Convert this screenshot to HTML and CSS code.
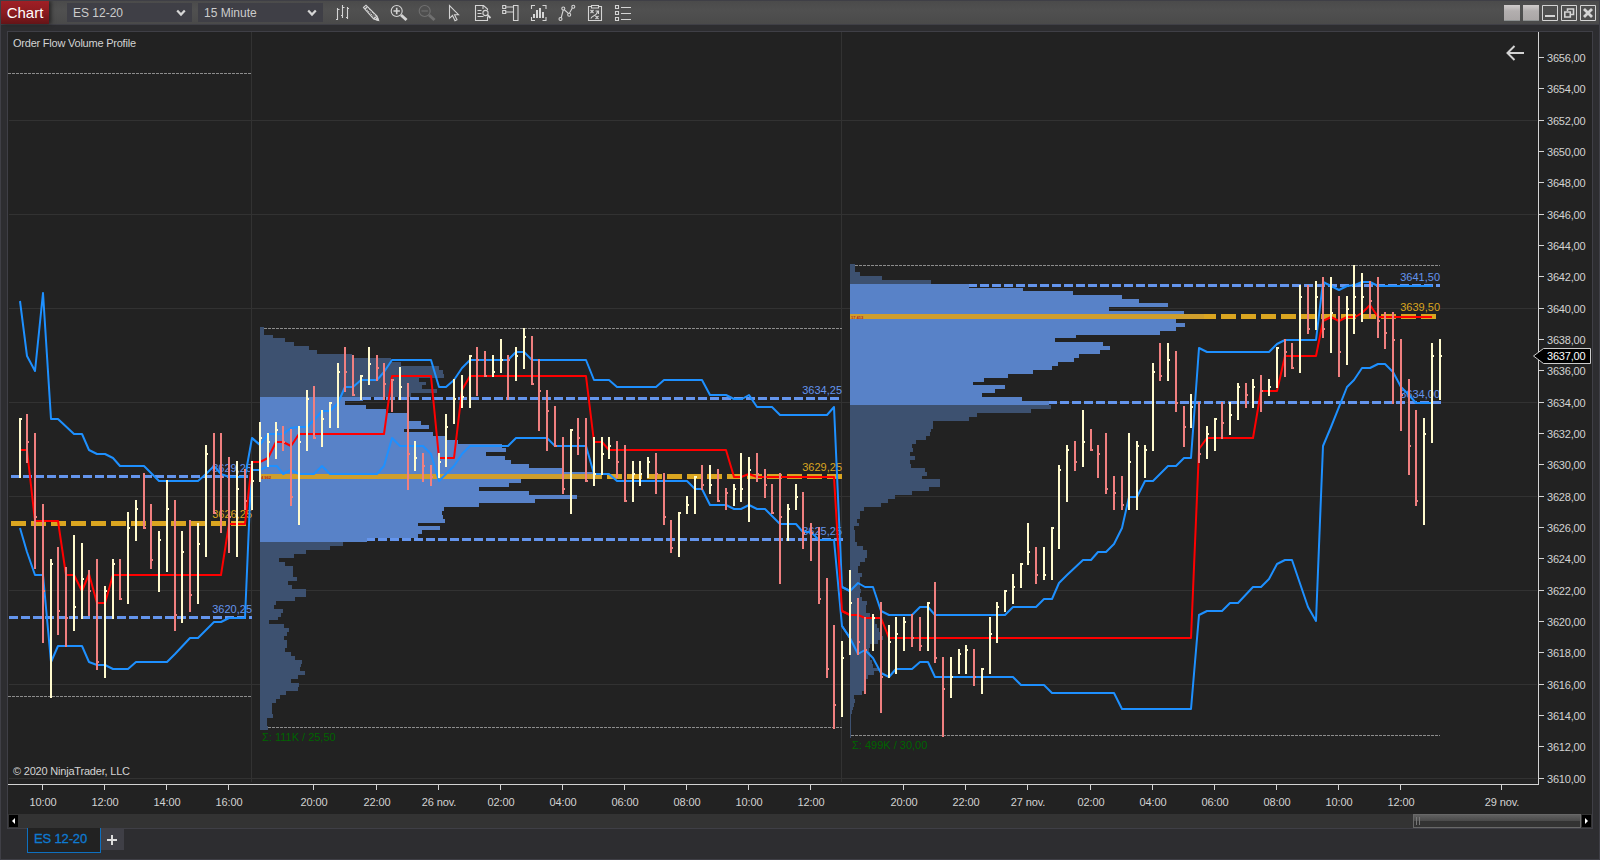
FILE: index.html
```html
<!DOCTYPE html>
<html lang="en">
<head>
<meta charset="utf-8">
<title>Chart - ES 12-20</title>
<link rel="stylesheet" href="styles.css">
</head>
<body>
<div class="window">
  <header class="toolbar">
    <div class="menu-title">Chart</div>
    <div class="select select-instrument"><span>ES 12-20</span><svg class="chevron" viewBox="0 0 10 8"><path d="M1.2 1.5 5 5.6 8.8 1.5"/></svg></div>
    <div class="select select-interval"><span>15 Minute</span><svg class="chevron" viewBox="0 0 10 8"><path d="M1.2 1.5 5 5.6 8.8 1.5"/></svg></div>
    <nav class="tools">
      <svg class="icon" viewBox="0 0 18 18"><path d="M3.500 4v12M8.500 1v13M13.500 3v12M2 15.500h1.500M3.500 5.500h2M7 11.500h1.500M8.500 3.500h2M12 13.500h1.500M13.500 4.500H15"/></svg>
      <svg class="icon" viewBox="0 0 18 18"><path d="M1.500 3.500 4 1.200l11 10.800 1.500 4.500-4.800-1.600zM11.700 15 15 12M3 5l2.500-2.500"/><path d="M3.500 4.500 13 14M6 3.500l8 8.500" stroke-dasharray="1 1"/><path d="M13.500 15.500l3 1-1-3z" fill="currentColor"/></svg>
      <svg class="icon" viewBox="0 0 18 18"><circle cx="6.700" cy="7" r="5.500"/><path d="M6.700 3.800v6.400M3.500 7h6.400" stroke-width="1.600"/><path d="M11 11l5.500 5" stroke-width="3"/></svg>
      <svg class="icon icon-off" viewBox="0 0 18 18"><circle cx="6.700" cy="7" r="5.500"/><path d="M3.500 7h6.400"/><path d="M11 11l5.500 5" stroke-width="3"/></svg>
      <svg class="icon" viewBox="0 0 18 18"><path d="M3.500 1.500v12.800l3-2.800 2.500 5.200 2-1-2.500-5h4z"/></svg>
      <svg class="icon" viewBox="0 0 18 18"><path d="M13.500 12.500v4h-12v-15h8l4 3.500v1M9 1.500v3.500M3.500 6.500h4M3.500 9.500h4M3.500 12.500h6"/><circle cx="11.500" cy="9" r="2.600"/><path d="M13.500 11l3 3" stroke-width="1.800"/></svg>
      <svg class="icon" viewBox="0 0 18 18"><path d="M.7 1.500h3v3h-3zM.7 6.500h3v3h-3zM3.700 3h7.800M3.700 8h7.800M11.500 1.500h4.500v15h-4.500z"/></svg>
      <svg class="icon" viewBox="0 0 18 18"><path d="M5 1.500H1.500V5M12.500 1.500H16V5M5 16.500H1.500V13M12.500 16.500H16V13"/><path class="solid" d="M3 10h2v4H3zM6 6h2v8H6zM9 4h2v10H9zM12 8h2v6h-2z"/></svg>
      <svg class="icon" viewBox="0 0 18 18"><path d="M3 14.500 5.500 5l5.500 5 4-7.200"/><g class="ring"><circle cx="2.500" cy="15" r="1.500"/><circle cx="5.300" cy="4.500" r="1.500"/><circle cx="11.200" cy="10.800" r="1.500"/><circle cx="15.300" cy="2.800" r="1.500"/></g></svg>
      <svg class="icon" viewBox="0 0 18 18"><path d="M5 2.500H2.500v14h13v-14H13M5.500 1.500h7v2.500h-7zM4.500 6l3 3m0-3-3 3M9.500 12l3 3m0-3-3 3M5 14.500c0-3 6-2 6.500-7M9.500 7h3v3"/></svg>
      <svg class="icon" viewBox="0 0 18 18"><path d="M1.500 1.500h3v3h-3zM1.500 7.500h3v3h-3zM1.500 13.500h3v3h-3zM7 3.500h10M7 9.500h10M7 15.500h10"/></svg>
    </nav>
    <div class="window-buttons">
      <i class="blank"></i><i class="blank"></i>
      <svg class="wbtn" viewBox="0 0 16 16"><path class="frame" d="M.5.5h15v15H.5z"/><path d="M3 11h10" stroke-width="2"/></svg>
      <svg class="wbtn" viewBox="0 0 16 16"><path class="frame" d="M.5.500h15v15H.5z"/><path d="M6.500 6V4h6v5.500H10M3.800 7h5.500v5H3.800z" stroke-width="1.600"/></svg>
      <svg class="wbtn" viewBox="0 0 16 16"><path class="frame" d="M.5.500h15v15H.5z"/><path d="M4 4l8 8M12 4l-8 8" stroke-width="2.800"/></svg>
    </div>
  </header>

  <main class="panel">
    <svg class="chart" id="chart" viewBox="8 32 1584 782" width="1584" height="782"></svg>
    <div class="scrollbar">
      <svg class="sb-btn" viewBox="0 0 9 12"><path d="M6 3v6L3 6z"/></svg>
      <div class="sb-track"><div class="sb-thumb"></div></div>
      <svg class="sb-btn" viewBox="0 0 9 12"><path d="M3 3v6l3-3z"/></svg>
    </div>
  </main>

  <footer class="tabs">
    <div class="tab">ES 12-20</div>
    <div class="tab-add"><svg viewBox="0 0 10 10"><path d="M5 0v10M0 5h10"/></svg></div>
  </footer>
</div>
<script src="chart.js"></script>
</body>
</html>
```

FILE: styles.css
```css
* { box-sizing: border-box; }

body {
  margin: 0;
  background: #2d2d30;
  font-family: "Liberation Sans", Arial, sans-serif;
  color: #ccc;
}

.window {
  width: 1600px;
  height: 860px;
  border: 1px solid #3f3f46;
  display: flex;
  flex-direction: column;
  overflow: hidden;
}

.toolbar {
  height: 24px;
  flex: none;
  display: flex;
  align-items: center;
  background: linear-gradient(#4b4b4b, #505050 40%, #4a4a4a);
  border-bottom: 1px solid #3f3f46;
}

.menu-title {
  width: 48px;
  height: 23px;
  background: linear-gradient(#a01f25, #8c1b20 50%, #641417);
  color: #fff;
  font-size: 15px;
  line-height: 23px;
  text-align: center;
  box-shadow: 2px 0 4px #222;
}

.select {
  height: 19px;
  display: flex;
  align-items: center;
  justify-content: space-between;
  padding: 0 6px;
  background: #3f3f46;
  font-size: 12px;
}
.select-instrument { width: 125px; margin-left: 18px; }
.select-interval { width: 125px; margin-left: 6px; }

.chevron {
  width: 10px;
  height: 8px;
  fill: none;
  stroke: #d6d6d6;
  stroke-width: 2.2;
}

.tools { display: flex; gap: 10px; margin-left: 11px; }

.icon {
  width: 18px;
  height: 18px;
  color: #d4d4d4;
  fill: none;
  stroke: currentColor;
  stroke-width: 1.1;
}
.icon-off { color: #707070; }
.icon .solid { fill: currentColor; stroke: none; }
.icon .ring { fill: #4d4d4d; }

.window-buttons { display: flex; gap: 3px; margin-left: auto; margin-right: 3px; }
.blank { width: 16px; height: 16px; background: linear-gradient(#d0cccc, #b3afaf 40%, #aaa6a6); border-bottom: 1px solid #8c9090; }
.wbtn { width: 16px; height: 16px; fill: none; stroke: #d4d4d4; }
.wbtn .frame { stroke-width: 1; }

.panel {
  flex: none;
  width: 1586px;
  height: 798px;
  margin: 6px 0 0 6px;
  border: 1px solid #3f3f46;
  background: #222;
}

.chart { display: block; }
.chart text { font-size: 11px; fill: #d3d3d3; }
.chart .crisp { shape-rendering: crispEdges; }
.chart .grid { stroke: #323232; }
.chart .axis { stroke: #d3d3d3; }
.chart .range { stroke: #8c8c8c; stroke-dasharray: 3 1; }
.chart .profile { fill: #3d5170; }
.chart .profile-va { fill: #5882c8; }
.chart .va-line { stroke: #6495ed; stroke-width: 3; }
.chart .poc-line { stroke: #daa520; stroke-width: 5; }
.chart .poc-solid { fill: #cf9e2c; }
.chart .va-dash { stroke-dasharray: 9 3; }
.chart .poc-dash { stroke-dasharray: 15 5; }
.chart text.va-label { fill: #6495ed; text-anchor: end; }
.chart text.poc-label { fill: #daa520; text-anchor: end; }
.chart text.poc-volume { fill: #b22222; font-size: 4px; font-weight: bold; }
.chart text.total { fill: #006400; }
.chart .developing { fill: none; stroke-width: 2; stroke-linejoin: round; }
.chart .dev-value { stroke: #1e90ff; }
.chart .dev-poc { stroke: #f00; }
.chart .up { fill: #fffacd; }
.chart .down { fill: #f08080; }
.chart .time { text-anchor: middle; letter-spacing: -0.1px; }
.chart .marker { fill: #000; stroke: #ccc; }
.chart text.marker-text { fill: #fff; }
.chart .back { fill: none; stroke: #d3d3d3; stroke-width: 2; }

.scrollbar { height: 14px; display: flex; align-items: center; padding: 0 1px; background: #333; }
.sb-btn { width: 9px; height: 12px; background: #000; fill: #fff; flex: none; }
.sb-track { flex: 1; height: 14px; display: flex; justify-content: flex-end; }
.sb-thumb {
  width: 168px;
  height: 14px;
  margin-right: 1px;
  border: 1px solid #686868;
  background:
    linear-gradient(#777, #777) 2px 2px / 1px 8px no-repeat,
    linear-gradient(#777, #777) 5px 2px / 1px 8px no-repeat,
    linear-gradient(#606060, #4a4a4a 49%, #333 50%, #333);
}

.tabs { display: flex; padding-left: 26px; margin-top: -1px; }
.tab {
  width: 74px;
  height: 25px;
  border: 1px solid #0e70c0;
  border-top: 0;
  background: #222;
  color: #0e7ad1;
  font-size: 13px;
  letter-spacing: -0.15px;
  -webkit-text-stroke: 0.3px #0e7ad1;
  line-height: 22px;
  padding-left: 6px;
  white-space: nowrap;
}
.tab-add { width: 23px; height: 21px; margin-top: 1px; padding-right: 1px; background: #3f3f46; display: grid; place-items: center; }
.tab-add svg { width: 10px; height: 10px; stroke: #ddd; stroke-width: 2; }
```

FILE: chart.js
```js
const NS = 'http://www.w3.org/2000/svg';
const chart = document.getElementById('chart');

function add(name, attrs, text) {
  const el = document.createElementNS(NS, name);
  for (const key in attrs) el.setAttribute(key, attrs[key]);
  if (text !== undefined) el.textContent = text;
  chart.appendChild(el);
  return el;
}
function line(x1, y1, x2, y2, cls) {
  add('line', { x1, y1, x2, y2, class: 'crisp ' + cls });
}

// Segment data is stored in thirds of a pixel, relative to each segment's origin.
const segments = [
  {
    x: 0, y: 270,
    bars: `60 w 444 624 447,81 r 432 579 516,105 r 489 897 741,129 r 702 1119 963,153 w 867 1284 882,
174 r 831 1095 1023,198 r 891 1131 1044,222 w 795 1083 1011,246 w 819 1047 927,267 r 900 1038 963,
291 r 867 1200 1176,315 w 948 1224 963,339 w 867 1047 882,360 r 867 990 987,384 w 726 1002 774,
408 w 690 813 717,432 r 609 777 774,453 r 702 897 870,477 w 783 966 810,501 w 630 906 717,
525 r 690 1083 1035,546 w 783 1059 846,570 r 750 1026 975,594 w 759 1002 822,618 w 525 861 552,
642 r 489 732 729,663 r 489 789 621,687 r 561 849 741,711 w 573 861 657,735 r 597 720 693,
756 w 573 720 633,780 w 456 636 504`,
    high: '60,93 81,258 105,304 129,69 153,447 174,447 222,492 246,492 267,540 291,552 315,552 339,563 360,588 432,588 477,632 594,632 618,612 642,588 663,612 687,621 735,621 756,504 780,525',
    low: '60,774 81,846 105,915 129,915 153,1176 174,1128 246,1128 267,1176 291,1185 315,1185 339,1197 384,1197 408,1176 501,1176 525,1152 570,1104 594,1104 642,1056 663,1056 687,1044 735,1044 754,600 780,600',
    poc: '60,540 81,540 105,753 174,753 198,915 222,915 246,963 267,912 291,999 315,999 339,915 663,915 687,762 735,762 756,576 780,576'
  },
  {
    x: 250, y: 310,
    bars: `54 w 369 471 396,78 w 336 447 360,99 r 348 423 396,123 r 357 588 561,147 w 348 645 396,
171 w 240 423 267,192 r 228 387 384,216 w 300 411 327,240 w 276 354 280,264 w 159 354 186,285 r 111 246 186,
309 r 135 258 255,333 w 195 270 198,357 w 111 225 162,381 r 135 213 174,402 r 159 270 222,426 r 207 306 210,
450 w 171 270 231,474 r 219 540 432,495 w 393 483 444,519 r 429 516 468,543 r 465 528 500,567 w 429 504 456,
588 w 312 471 351,612 w 207 342 267,636 w 195 294 260,660 w 135 294 138,681 r 111 258 150,705 r 123 201 198,
729 w 135 201 186,753 w 87 189 150,774 r 135 270 150,798 w 111 213 138,822 w 54 177 81,846 r 78 225 222,
867 r 147 363 243,891 r 240 423 303`,
    high: '6,384 30,405 54,373 99,373 123,355 147,350 171,350 195,326 216,303 240,303 264,280 285,231 309,231 333,210 381,210 402,186 426,150 543,150 567,231 588,231 612,210 636,175 660,150 774,150 798,126 822,126 846,150 900,150',
    low: '6,480 30,480 54,468 81,468 99,492 123,480 147,492 192,492 216,468 240,492 381,492 402,468 426,384 450,408 519,408 543,432 567,513 588,492 612,468 636,432 660,408 774,408 798,384 891,384',
    poc: '6,456 30,456 54,444 78,396 99,396 123,407 147,372 402,372 426,198 543,198 567,444 612,444 636,240 660,198 900,198',
    top: 51, va: [261, 696],
    // bottom edge and right edge of every volume row
    rows: `75 42,84 69,96 105,108 132,120 177,132 201,144 306,156 423,168 453,180 567,192 579,204 582,216 507,225 528,
237 516,249 561,261 483,273 339,285 285,297 348,309 408,333 471,345 513,357 537,366 462,378 549,390 591,402 624,
414 756,426 768,438 708,450 765,462 783,474 837,486 936,507 1032,519 813,531 777,543 687,555 837,567 981,579 855,
591 687,603 582,615 576,627 579,639 585,648 504,660 570,672 516,684 504,696 351,708 279,720 240,732 168,744 132,
756 87,768 105,801 129,813 141,825 114,837 126,861 168,873 135,885 78,897 72,909 99,921 93,930 84,942 57,954 102,
966 117,978 111,990 102,1014 111,1026 105,1038 123,1050 135,1062 156,1071 153,1083 150,1095 165,1107 144,1119 123,
1131 147,1143 144,1155 108,1167 90,1179 78,1212 66,1224 69,1248 51,1260 54`
  },
  {
    x: 540, y: 310,
    bars: `45 r 288 411 408,69 r 381 552 537,93 w 357 612 360,114 r 324 435 384,138 r 324 516 513,162 w 381 528 492,
186 w 381 495 432,207 w 381 447 408,231 r 393 504 456,255 r 405 576 573,279 w 453 576 492,300 w 453 528 492,
324 w 441 504 456,348 r 429 552 492,372 r 489 645 621,393 r 630 729 714,417 w 606 741 609,441 w 558 612 585,
465 w 498 612 501,486 r 465 540 525,510 w 465 552 525,534 r 477 576 573,558 r 534 600 549,582 w 522 588 537,
603 w 429 576 537,627 w 441 636 480,651 r 429 516 492,675 r 477 564 525,696 r 522 612 609,720 r 489 822 621,
744 w 582 693 597,768 w 522 600 561,789 r 546 717 669,813 r 639 753 669,837 r 651 882 867,861 r 804 1104 1077,
882 r 945 1257 1185,906 w 993 1221 1044,930 w 780 1035 879`,
    high: '0,150 138,150 162,210 207,210 231,231 348,231 372,210 486,210 510,255 558,255 582,266 606,266 627,255 651,291 696,291 720,315 861,315 882,292 906,831 930,843',
    low: '0,384 21,384 45,408 138,408 162,492 207,492 231,513 441,513 465,537 486,537 510,585 558,585 582,597 603,597 627,585 651,597 675,597 720,642 768,642 789,666 813,666 837,690 882,690 906,948 930,984',
    poc: '0,198 138,198 162,396 186,396 207,420 558,420 582,500 603,500 627,492 651,500 882,500 906,903 930,914'
  },
  {
    x: 840, y: 250,
    bars: `54 r 1044 1215 1176,75 r 1101 1332 1200,99 w 1092 1203 1104,123 r 1056 1389 1281,147 w 1125 1284 1176,
168 w 1101 1272 1152,192 w 1101 1203 1116,216 r 1092 1191 1164,240 r 1101 1203 1188,264 w 1056 1203 1059,
285 r 996 1239 1224,309 r 1221 1461 1317,333 w 1221 1344 1281,357 w 1197 1272 1212,378 w 1185 1272 1200,
402 r 1197 1308 1281,426 w 1254 1332 1257,450 w 1101 1272 1152,471 w 1056 1179 1071,495 w 1020 1086 1023,
519 w 972 1062 1011,543 w 939 1014 942,564 w 819 945 906,588 r 891 1002 975,612 w 891 990 975,636 w 831 990 834,
657 w 645 897 660,681 w 585 756 600,705 r 573 663 636,729 w 480 651 576,753 r 537 603 600,774 r 585 684 612,
798 r 549 732 717,822 r 678 780 729,846 r 678 780 765,867 w 549 780 636,891 w 573 780 588`,
    high: '6,1011 30,1023 54,999 75,1011 99,1011 123,1083 147,1095 216,1095 240,1071 264,1071 285,1095 495,1095 519,1071 588,1071 612,1047 636,1047 657,999 681,975 729,930 753,930 774,906 798,906 822,882 846,834 867,741 891,741',
    low: '6,1128 30,1164 54,1212 75,1200 99,1224 123,1269 147,1281 168,1257 216,1257 240,1236 264,1236 285,1281 519,1281 543,1305 612,1305 636,1329 822,1329 846,1377 900,1377',
    poc: '6,1083 30,1095 54,1095 75,1104 123,1104 147,1164 900,1164',
    top: 42, va: [102, 465],
    rows: `66 45,78 60,90 126,102 273,114 387,123 549,135 699,147 846,159 897,171 984,183 807,207 1032,219 1008,231 1035,
243 1008,255 960,264 708,276 645,288 789,300 810,312 780,324 717,336 702,348 654,360 636,372 579,384 504,396 432,
405 399,417 495,429 465,441 426,453 546,465 627,477 633,489 573,501 411,513 387,537 279,546 273,558 270,570 258,
582 228,594 216,606 219,618 210,630 225,642 210,654 213,666 255,678 261,687 246,711 300,723 267,735 216,747 165,
759 144,771 123,783 72,807 60,819 51,828 57,840 42,876 45,888 51,900 69,924 81,936 75,948 60,969 54,981 66,
1017 60,1029 63,1041 60,1053 66,1065 81,1089 78,1101 90,1122 105,1134 111,1146 117,1158 120,1170 129,1182 114,
1194 90,1206 87,1230 90,1242 96,1254 99,1263 117,1275 102,1287 84,1311 78,1323 75,1335 66,1347 42,1359 45,
1371 42,1380 39,1392 36,1464 33`
  },
  {
    x: 1130, y: 250,
    bars: `45 w 585 684 600,69 w 339 603 366,90 r 279 393 378,114 w 279 393 330,138 r 303 486 459,162 r 468 591 531,
183 w 432 534 471,207 r 456 639 612,231 w 528 627 552,255 w 504 603 507,276 r 456 567 519,300 w 456 555 495,
324 w 399 510 411,348 r 399 474 435,369 w 387 474 411,393 r 375 486 423,417 w 387 438 411,441 w 291 414 294,
465 r 267 381 306,486 r 279 357 354,510 w 105 369 141,534 r 105 252 237,558 w 93 240 141,579 r 81 264 237,
603 w 81 309 189,627 r 138 381 306,651 w 138 345 177,672 w 45 252 141,696 w 69 216 141,720 r 93 204 153,
744 r 81 264 213,765 r 186 297 249,789 r 186 462 270,813 r 267 543 435,837 r 387 675 588,858 r 480 768 753,
882 w 504 825 552,906 w 279 579 318,930 w 267 450 318`,
    high: '0,741 21,741 45,693 69,693 114,648 138,648 162,624 183,624 207,294 231,306 417,306 441,282 465,270 558,270 579,96 603,108 627,120 651,108 675,105 696,96 720,96 744,107 906,107',
    low: '0,1377 183,1377 207,1095 231,1083 276,1083 300,1059 324,1059 369,1011 393,1011 417,987 441,942 465,930 486,930 534,1071 558,1113 579,588 603,531 651,411 672,390 696,354 720,354 744,342 765,342 789,366 813,411 837,435 858,459 906,459',
    poc: '0,1164 183,1164 207,597 231,564 369,564 393,423 441,423 465,318 558,318 579,213 603,201 627,213 651,201 675,201 696,189 720,165 744,201 906,201'
  }
];

// grid
for (let y = 120.5; y < 784; y += 94) line(9, y, 1537, y, 'grid');
line(251.5, 32, 251.5, 782, 'grid');
line(841.5, 32, 841.5, 782, 'grid');

// session ranges
[[8, 251, 73.5], [8, 252, 696.5], [264, 842, 328.5], [268, 842, 727.5], [855, 1440, 265.5], [851, 1440, 735.5]]
  .forEach(([x1, x2, y]) => line(x1, y, x2, y, 'range'));

// volume profiles
segments.filter(s => s.rows).forEach(s => {
  let top = s.top;
  s.rows.split(',').forEach(row => {
    const [bottom, right] = row.trim().split(' ').map(Number);
    const inside = top >= s.va[0] && bottom <= s.va[1];
    add('rect', {
      x: s.x + 10, y: s.y + top / 3, width: (right - 30) / 3, height: (bottom - top) / 3,
      class: 'crisp ' + (inside ? 'profile-va' : 'profile')
    });
    top = bottom;
  });
});

// value area and point of control levels
[[11, 248, 476.5], [9, 252, 617.5], [374, 842, 398.5], [378, 843, 539.5], [980, 1440, 285.5], [1060, 1441, 402.5]]
  .forEach(([x1, x2, y]) => line(x1, y, x2, y, 'va-line va-dash'));
line(363, 398.5, 371, 398.5, 'va-line');
line(367, 539.5, 375, 539.5, 'va-line');
line(969, 285.5, 977, 285.5, 'va-line');
line(1049, 402.5, 1057, 402.5, 'va-line');
[[11, 246, 523.5], [607, 842, 476.5], [1201, 1436, 316.5]]
  .forEach(([x1, x2, y]) => line(x1, y, x2, y, 'poc-line poc-dash'));
add('rect', { x: 260, y: 474, width: 342, height: 5, class: 'crisp poc-solid' });
add('rect', { x: 850, y: 314, width: 354, height: 5, class: 'crisp poc-solid' });
add('text', { x: 261, y: 479, class: 'poc-volume' }, '4 962');
add('text', { x: 851, y: 319, class: 'poc-volume' }, '17 413');

[[252, 472, '3629,25', 'va'], [252, 518, '3626,25', 'poc'], [252, 613, '3620,25', 'va'],
 [842, 394, '3634,25', 'va'], [842, 471, '3629,25', 'poc'], [842, 535, '3625,25', 'va'],
 [1440, 281, '3641,50', 'va'], [1440, 311, '3639,50', 'poc'], [1440, 398, '3634,00', 'va']]
  .forEach(([x, y, t, kind]) => add('text', { x, y, class: kind + '-label' }, t));
add('text', { x: 262, y: 741, class: 'total' }, 'Σ: 111K / 25,50');
add('text', { x: 852, y: 749, class: 'total' }, 'Σ: 499K / 30,00');

// developing levels
[['high', 'dev-value'], ['low', 'dev-value'], ['poc', 'dev-poc']].forEach(([key, cls]) => {
  segments.forEach(s => {
    const points = s[key].split(' ').map(p => {
      const [x, y] = p.split(',').map(Number);
      return (s.x + x / 3).toFixed(2) + ',' + Math.round(s.y + y / 3);
    }).join(' ');
    add('polyline', { points, class: 'developing ' + cls });
  });
});

// price bars with closing tick
segments.forEach(s => s.bars.split(',').forEach(bar => {
  const [x, kind, top, bottom, close] = bar.trim().split(' ');
  const cls = 'crisp ' + (kind === 'w' ? 'up' : 'down');
  const left = Math.round(s.x + x / 3 - 1);
  add('rect', { x: left, y: s.y + top / 3, width: 2, height: (bottom - top) / 3, class: cls });
  add('rect', { x: left + 2, y: Math.round(s.y + close / 3 - 1), width: 1, height: 2, class: cls });
}));

// axes
line(8, 784.5, 1539, 784.5, 'axis');
line(1538.5, 32, 1538.5, 785, 'axis');
for (let price = 3656; price >= 3610; price -= 2) {
  const y = Math.floor(57.5 + (3656 - price) * 15.67) + 0.5;
  line(1539, y, 1544, y, 'axis');
  add('text', { x: 1547, y: y + 4.5, textLength: 38.5 }, price + ',00');
}
[[42, '10:00'], [104, '12:00'], [166, '14:00'], [228, '16:00'], [313, '20:00'], [376, '22:00'], [438, '26 nov.'],
 [500, '02:00'], [562, '04:00'], [624, '06:00'], [686, '08:00'], [748, '10:00'], [810, '12:00'], [903, '20:00'],
 [965, '22:00'], [1027, '27 nov.'], [1090, '02:00'], [1152, '04:00'], [1214, '06:00'], [1276, '08:00'],
 [1338, '10:00'], [1400, '12:00'], [1501, '29 nov.']].forEach(([x, label]) => {
  line(x + 0.5, 785, x + 0.5, 790, 'axis');
  add('text', { x: x + 1, y: 806, class: 'time' }, label);
});

add('path', { d: 'M1533.5 356 1543.500 348.500H1590.500V363.500H1543.500Z', class: 'marker' });
add('text', { x: 1547, y: 360, textLength: 38.5, class: 'marker-text' }, '3637,00');
add('path', { d: 'M1524 53H1508M1514.500 46 1507.500 53l7 7', class: 'back' });
add('text', { x: 13, y: 47, textLength: 123 }, 'Order Flow Volume Profile');
add('text', { x: 13, y: 775, textLength: 117 }, '© 2020 NinjaTrader, LLC');
```
